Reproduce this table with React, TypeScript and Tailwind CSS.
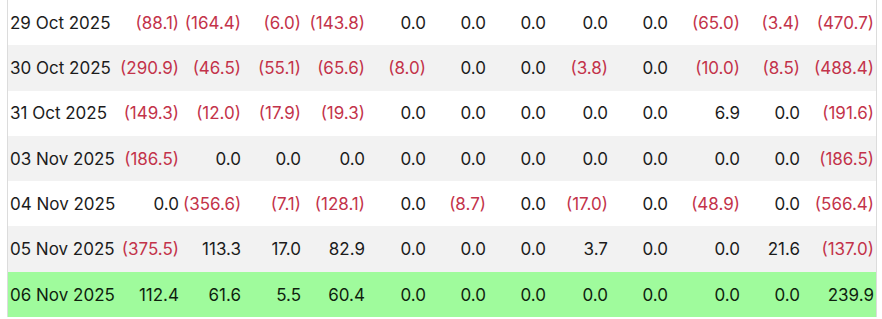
const rows: { date: string; values: string[]; tone: "white" | "gray" | "green" }[] = [
  { date: "29 Oct 2025", values: ["(88.1)", "(164.4)", "(6.0)", "(143.8)", "0.0", "0.0", "0.0", "0.0", "0.0", "(65.0)", "(3.4)", "(470.7)"], tone: "white" },
  { date: "30 Oct 2025", values: ["(290.9)", "(46.5)", "(55.1)", "(65.6)", "(8.0)", "0.0", "0.0", "(3.8)", "0.0", "(10.0)", "(8.5)", "(488.4)"], tone: "gray" },
  { date: "31 Oct 2025", values: ["(149.3)", "(12.0)", "(17.9)", "(19.3)", "0.0", "0.0", "0.0", "0.0", "0.0", "6.9", "0.0", "(191.6)"], tone: "white" },
  { date: "03 Nov 2025", values: ["(186.5)", "0.0", "0.0", "0.0", "0.0", "0.0", "0.0", "0.0", "0.0", "0.0", "0.0", "(186.5)"], tone: "gray" },
  { date: "04 Nov 2025", values: ["0.0", "(356.6)", "(7.1)", "(128.1)", "0.0", "(8.7)", "0.0", "(17.0)", "0.0", "(48.9)", "0.0", "(566.4)"], tone: "white" },
  { date: "05 Nov 2025", values: ["(375.5)", "113.3", "17.0", "82.9", "0.0", "0.0", "0.0", "3.7", "0.0", "0.0", "21.6", "(137.0)"], tone: "gray" },
  { date: "06 Nov 2025", values: ["112.4", "61.6", "5.5", "60.4", "0.0", "0.0", "0.0", "0.0", "0.0", "0.0", "0.0", "239.9"], tone: "green" },
];

const toneClass = {
  white: "bg-white",
  gray: "bg-[#f2f2f2]",
  green: "bg-[#9ffb9c] text-[#0f1f0f]",
};

export default function App() {
  return (
    <div className="h-[319px] w-[882px] overflow-hidden bg-white font-['Inter',sans-serif] text-[17px] text-[#1c1c1c]">
      <div className="ml-[7px] w-[870px] border-l border-r border-[#dcdcdc]">
        {rows.map((row) => (
          <div
            key={row.date}
            className={`grid h-[45.3px] grid-cols-[110px_65px_62px_60px_64px_61px_60px_60px_62px_60px_72px_60px_74px] items-center pt-[2px] ${toneClass[row.tone]}`}
          >
            <div className="pl-[2px] whitespace-nowrap">{row.date}</div>
            {row.values.map((v, i) => (
              <div
                key={i}
                className={`pr-[4px] text-right whitespace-nowrap ${v.startsWith("(") ? "text-[#c3334a]" : ""}`}
              >
                {v}
              </div>
            ))}
          </div>
        ))}
      </div>
    </div>
  );
}
